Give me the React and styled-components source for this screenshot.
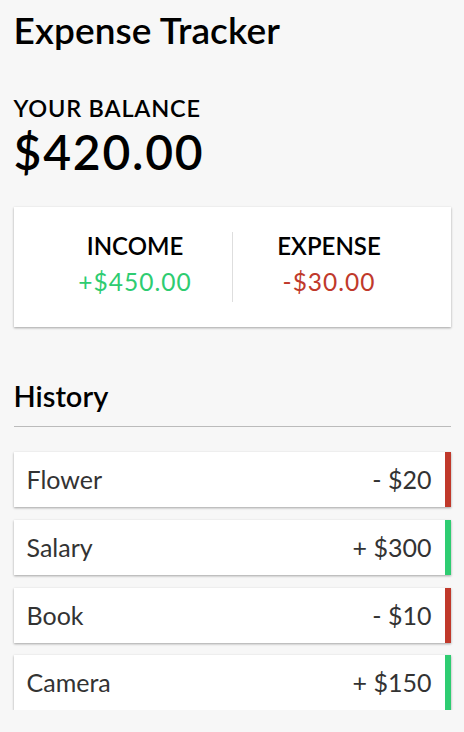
import React from "react";
import styled, { createGlobalStyle } from "styled-components";

const GlobalStyle = createGlobalStyle`
  html, body { margin: 0; padding: 0; }
  body {
    background-color: #f7f7f7;
    font-family: Lato, "Open Sans", sans-serif;
    font-size: 18px;
    color: #000;
  }
  * { box-sizing: border-box; }
`;

const shadow = "0 1px 3px rgba(0, 0, 0, 0.12), 0 1px 2px rgba(0, 0, 0, 0.24)";

const Container = styled.div`
  width: 437px;
  margin: 8px auto 0;
`;

const Title = styled.h1`
  font-size: 37px;
  font-weight: 600;
  line-height: 1.2;
  letter-spacing: 0.1px;
  margin: 0;
`;

const Label = styled.h4`
  font-size: 23.5px;
  font-weight: 600;
  line-height: 1.2;
  letter-spacing: 0.8px;
  text-transform: uppercase;
  margin: ${(p) => (p.$top ? "42px 0 0" : "0")};
`;

const Balance = styled.div`
  font-size: 48px;
  font-weight: 600;
  line-height: 1.2;
  letter-spacing: 1.8px;
`;

const Card = styled.div`
  background: #fff;
  box-shadow: ${shadow};
  padding: 25px;
  display: flex;
  margin-top: 27px;
`;

const Column = styled.div`
  flex: 1;
  text-align: center;
  & + & { border-left: 1px solid #dedede; }
`;

const ColLabel = styled.h4`
  font-size: 24px;
  font-weight: 600;
  line-height: 1.2;
  text-transform: uppercase;
  margin: 0;
`;

const Money = styled.p`
  font-size: 24.5px;
  line-height: 1.2;
  letter-spacing: 1px;
  margin: 6px 0;
  color: ${(p) => (p.$plus ? "#2ecc71" : "#c0392b")};
`;

const SectionTitle = styled.h3`
  font-size: 29px;
  font-weight: 600;
  line-height: 1.2;
  margin: 52px 0 0;
  padding-bottom: 12px;
  border-bottom: 1px solid #bbb;
`;

const List = styled.ul`
  list-style: none;
  padding: 0;
  margin: 25px 0 0;
  display: flex;
  flex-direction: column;
  gap: 12.7px;
`;

const Item = styled.li`
  background: #fff;
  box-shadow: ${shadow};
  color: #333;
  display: flex;
  justify-content: space-between;
  padding: 13px;
  font-size: 25px;
  line-height: 1.16;
  border-right: 6px solid ${(p) => (p.$plus ? "#2ecc71" : "#c0392b")};
`;

const transactions = [
  { text: "Flower", amount: -20 },
  { text: "Salary", amount: 300 },
  { text: "Book", amount: -10 },
  { text: "Camera", amount: 150 },
];

export default function App() {
  return (
    <>
      <GlobalStyle />
      <Container>
        <Title>Expense Tracker</Title>
        <Label $top>Your Balance</Label>
        <Balance>$420.00</Balance>
        <Card>
          <Column>
            <ColLabel>Income</ColLabel>
            <Money $plus>+$450.00</Money>
          </Column>
          <Column>
            <ColLabel>Expense</ColLabel>
            <Money>-$30.00</Money>
          </Column>
        </Card>
        <SectionTitle>History</SectionTitle>
        <List>
          {transactions.map((t) => (
            <Item key={t.text} $plus={t.amount > 0}>
              <span>{t.text}</span>
              <span>
                {t.amount < 0 ? "-" : "+"} ${Math.abs(t.amount)}
              </span>
            </Item>
          ))}
        </List>
      </Container>
    </>
  );
}
